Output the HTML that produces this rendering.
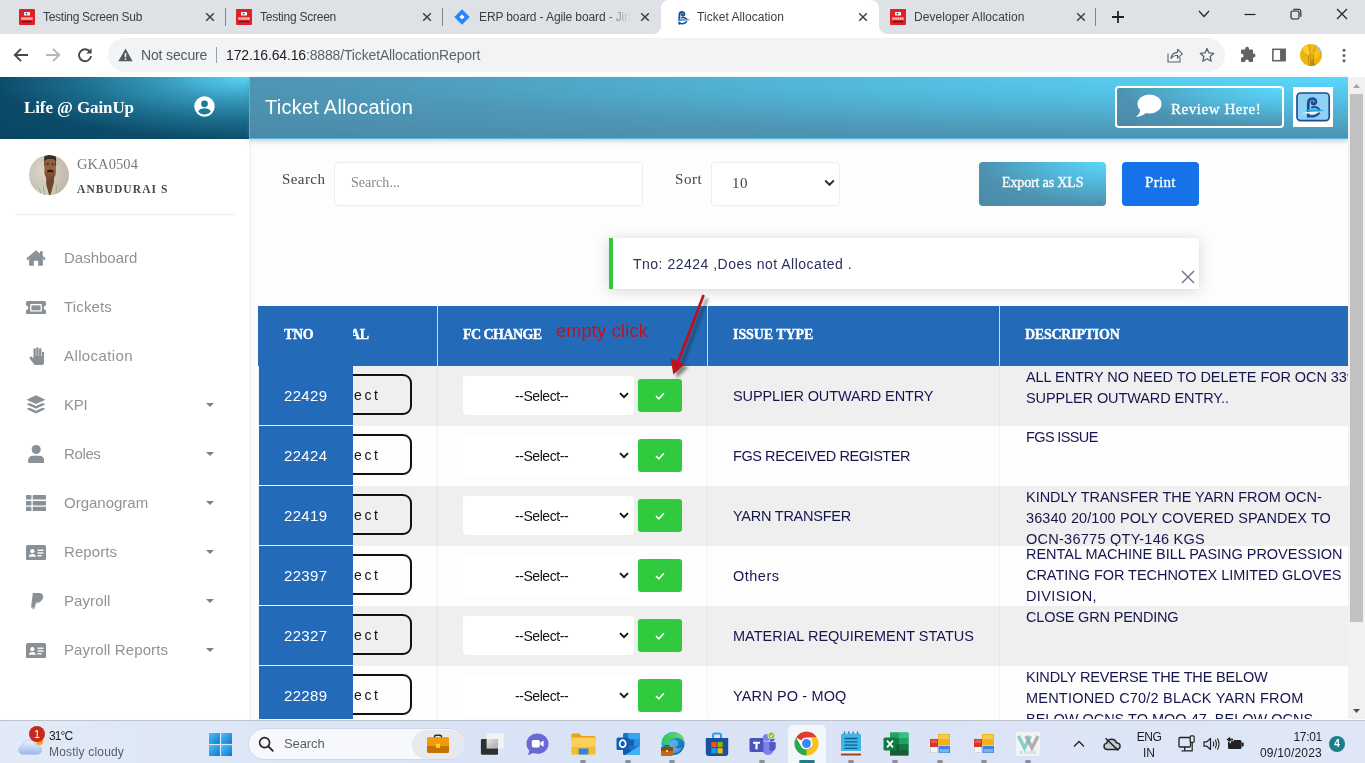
<!DOCTYPE html>
<html lang="en">
<head>
<meta charset="utf-8">
<title>Ticket Allocation</title>
<style>
*{box-sizing:border-box;margin:0;padding:0}
html,body{width:1365px;height:763px;overflow:hidden;background:#fdfdfd;font-family:"Liberation Sans",sans-serif;}
.abs{position:absolute}
#root{position:relative;width:1365px;height:763px;overflow:hidden;background:transparent;will-change:transform}

/* ---------- browser chrome ---------- */
#tabbar{left:0;top:0;width:1365px;height:34px;background:#dee1e6}
.tab{position:absolute;top:0;height:34px;font-size:12px;color:#3c4043;line-height:35px;white-space:nowrap}
.tab .ttl{position:absolute;left:43px;top:0}
.tab .cls{position:absolute;top:0;font-size:0}
.tabsep{position:absolute;top:8px;width:1px;height:18px;background:#80868b}
#tab-active{left:661px;top:0;width:218px;height:34px;background:#fff;border-radius:8px 8px 0 0}
#toolbar{left:0;top:34px;width:1365px;height:43px;background:#fff}
#omni{left:108px;top:38px;width:1117px;height:34px;border-radius:17px;background:#f1f3f4}
.urltxt{font-size:14px;letter-spacing:-.15px;line-height:34px;top:38px;white-space:nowrap}

/* ---------- sidebar ---------- */
#side{left:0;top:77px;width:249px;height:642px;background:#fff}
#sidehead{left:0;top:77px;width:249px;height:62px;background:radial-gradient(ellipse farthest-corner at 100% 0%,#5ad6fb 0%,#3596b8 27%,#1b6c8b 50%,#0b4a68 73%,#0a4664 100%)}
#brand{left:24px;top:77px;height:62px;line-height:61px;color:#fff;font-family:"Liberation Serif",serif;font-weight:bold;font-size:17px;letter-spacing:-.1px;white-space:nowrap}
.nav{position:absolute;left:64px;font-size:15px;color:#8d9498;letter-spacing:.55px;white-space:nowrap;line-height:20px}
.caret{position:absolute;left:206px;width:0;height:0;border-left:4.5px solid transparent;border-right:4.5px solid transparent;border-top:4.5px solid #7b8287}
.nico{position:absolute;left:25px}

/* ---------- main ---------- */
#mainhead{left:249px;top:77px;width:1099px;height:62px;border-left:1px solid #5ab2d6;border-bottom:1px solid #58b6da;background:radial-gradient(ellipse farthest-corner at 100% 0%,#5ad8fd 0%,#52bbdd 32%,#4e97b6 66%,#4b89a6 100%);box-shadow:0 2px 5px rgba(60,120,150,.35)}
#title{left:265px;top:77px;height:62px;line-height:60px;color:#fff;font-size:20px;letter-spacing:.25px;white-space:nowrap}
.lbl{font-family:"Liberation Serif",serif;font-size:15px;color:#444;letter-spacing:.5px}
.inp{background:#fff;border:1px solid #ededed;border-radius:4px}

/* ---------- table ---------- */
#thead{left:258px;top:306px;width:1090px;height:60px;background:#236bb8}
.th{position:absolute;top:306px;height:60px;line-height:58px;-webkit-text-stroke:.35px #fff;color:#fff;font-family:"Liberation Serif",serif;font-weight:bold;font-size:14px;letter-spacing:.3px;white-space:nowrap}
.row{position:absolute;left:258px;width:1090px;height:60px;overflow:hidden}
.row.odd{background:#efefef}
.row.even{background:#fdfdfd}
.tno{position:absolute;left:1px;top:0;width:94px;height:59px;background:#236bb8;color:#fff;font-size:15px;line-height:60px;padding-left:25px;letter-spacing:.32px}
.selbtn{position:absolute;left:40px;top:8px;width:114px;height:41px;border:2px solid #111;border-radius:9px}
.ect{position:absolute;left:96px;top:9px;line-height:41px;font-size:14px;letter-spacing:2.6px;color:#111}
.dd{position:absolute;left:205px;top:10px;width:171px;height:39px;background:#fff;border-radius:3px}
.ddt{position:absolute;left:52px;top:.6px;line-height:39px;font-size:14px;letter-spacing:-.44px;color:#111;white-space:nowrap}
.ok{position:absolute;left:380px;top:13px;width:44px;height:33px;background:#31c93d;border-radius:3px}
.itype{position:absolute;left:475px;top:0;line-height:60px;font-size:14.5px;color:#16164f;white-space:nowrap}
.desc{position:absolute;left:768px;top:0;width:340px;font-size:14.5px;line-height:21px;color:#16164f;white-space:nowrap}
.vline{position:absolute;top:0;width:1px;height:60px;background:rgba(0,0,0,.045)}

/* ---------- taskbar ---------- */
#taskbar{left:0;top:720px;width:1365px;height:43px;background:linear-gradient(90deg,#e2eaf7 0%,#d9e3f6 35%,#dbe4f6 70%,#dfe7f7 100%);border-top:1px solid #bcc3cd}
.tbt{font-size:12px;line-height:16px;color:#1b1b1b;white-space:nowrap}
</style>
</head>
<body>
<div id="root">

<!-- BROWSER CHROME -->
<div id="tabbar" class="abs"></div>
<div id="tab-active" class="abs"></div>
<svg class="abs" style="left:653px;top:26px" width="8" height="8"><path d="M8 0V8H0A8 8 0 0 0 8 0Z" fill="#fff"/></svg>
<svg class="abs" style="left:879px;top:26px" width="8" height="8"><path d="M0 0V8H8A8 8 0 0 1 0 0Z" fill="#fff"/></svg>

<!-- tab 1 -->
<div class="tab" style="left:0;width:225px">
  <svg class="abs" style="left:19px;top:9px" width="16" height="16" viewBox="0 0 16 16"><rect width="16" height="16" rx="1" fill="#dc2228"/><rect x="5" y="3.100" width="6" height="3.400" rx=".5" fill="#f4f4f6"/><circle cx="7.500" cy="4.600" r=".9" fill="#3a4a6a"/><rect x="2.30" y="8.300" width="1.500" height="2.500" fill="#fde4e4" opacity=".9"/><rect x="4.25" y="8.300" width="1.500" height="2.500" fill="#fde4e4" opacity=".9"/><rect x="6.20" y="8.300" width="1.500" height="2.500" fill="#fde4e4" opacity=".9"/><rect x="8.15" y="8.300" width="1.500" height="2.500" fill="#fde4e4" opacity=".9"/><rect x="10.10" y="8.300" width="1.500" height="2.500" fill="#fde4e4" opacity=".9"/><rect x="12.05" y="8.300" width="1.500" height="2.500" fill="#fde4e4" opacity=".9"/><rect x="3" y="12.200" width="10" height="1.100" fill="#1d2a2a"/></svg>
  <span class="ttl" style="letter-spacing:-.28px">Testing Screen Sub</span>
  <svg class="abs" style="left:205px;top:12px" width="10" height="10" viewBox="0 0 10 10"><path d="M1.2 1.2L8.8 8.8M8.8 1.2L1.2 8.8" stroke="#3c4043" stroke-width="1.5" fill="none"/></svg>
</div>
<div class="tabsep" style="left:225px"></div>
<!-- tab 2 -->
<div class="tab" style="left:217px;width:225px">
  <svg class="abs" style="left:19px;top:9px" width="16" height="16" viewBox="0 0 16 16"><rect width="16" height="16" rx="1" fill="#dc2228"/><rect x="5" y="3.100" width="6" height="3.400" rx=".5" fill="#f4f4f6"/><circle cx="7.500" cy="4.600" r=".9" fill="#3a4a6a"/><rect x="2.30" y="8.300" width="1.500" height="2.500" fill="#fde4e4" opacity=".9"/><rect x="4.25" y="8.300" width="1.500" height="2.500" fill="#fde4e4" opacity=".9"/><rect x="6.20" y="8.300" width="1.500" height="2.500" fill="#fde4e4" opacity=".9"/><rect x="8.15" y="8.300" width="1.500" height="2.500" fill="#fde4e4" opacity=".9"/><rect x="10.10" y="8.300" width="1.500" height="2.500" fill="#fde4e4" opacity=".9"/><rect x="12.05" y="8.300" width="1.500" height="2.500" fill="#fde4e4" opacity=".9"/><rect x="3" y="12.200" width="10" height="1.100" fill="#1d2a2a"/></svg>
  <span class="ttl" style="letter-spacing:-.24px">Testing Screen</span>
  <svg class="abs" style="left:205px;top:12px" width="10" height="10" viewBox="0 0 10 10"><path d="M1.2 1.2L8.8 8.8M8.8 1.2L1.2 8.8" stroke="#3c4043" stroke-width="1.5" fill="none"/></svg>
</div>
<div class="tabsep" style="left:442px"></div>
<!-- tab 3 -->
<div class="tab" style="left:435px;width:225px">
  <svg class="abs" style="left:19px;top:9px" width="16" height="16" viewBox="0 0 16 16"><path d="M8 0.3L15.7 8L8 15.7L0.3 8Z" fill="#2684ff"/><path d="M8 5.4L10.6 8L8 10.6L5.4 8Z" fill="#fff"/></svg>
  <span class="ttl" style="left:44px;width:155px;overflow:hidden;letter-spacing:-.12px;-webkit-mask-image:linear-gradient(90deg,#000 125px,transparent 152px)">ERP board - Agile board - Jira</span>
  <svg class="abs" style="left:205px;top:12px" width="10" height="10" viewBox="0 0 10 10"><path d="M1.2 1.2L8.8 8.8M8.8 1.2L1.2 8.8" stroke="#3c4043" stroke-width="1.5" fill="none"/></svg>
</div>
<!-- tab 4 active -->
<div class="tab" style="left:653px;width:225px">
  <svg class="abs" style="left:12.500px;top:.7px" width="33" height="33" viewBox="0 0 50 50"><path d="M20.300 34.600V21.500C20.300 18.300 22 16.600 24.300 16.600C26.600 16.600 28 18 27.900 19.900C27.800 21.500 26.600 22.300 25.300 22.100C24.200 21.900 23.800 20.900 24.200 20" stroke="#1f4e90" stroke-width="2.900" fill="none" stroke-linecap="round"/><path d="M24 25.400C27 24.600 30 25.600 31.300 27.600" stroke="#1f4e90" stroke-width="2.300" fill="none" stroke-linecap="round"/><path d="M20.300 33.800C24 35.200 29 34.200 31 31.200" stroke="#1f4e90" stroke-width="2.400" fill="none" stroke-linecap="round"/><path d="M16.500 28.800Q24 26.200 37.500 28.300Q30 30.400 22 30.200Z" fill="#29a7e6"/><path d="M14.800 31.300Q21 29.500 31.800 30Q27 32.400 20 31.600Z" fill="#fff"/></svg>
  <span class="ttl" style="left:44px;letter-spacing:.04px">Ticket Allocation</span>
  <svg class="abs" style="left:205px;top:12px" width="10" height="10" viewBox="0 0 10 10"><path d="M1.2 1.2L8.8 8.8M8.8 1.2L1.2 8.8" stroke="#3c4043" stroke-width="1.5" fill="none"/></svg>
</div>
<!-- tab 5 -->
<div class="tab" style="left:871px;width:225px">
  <svg class="abs" style="left:19px;top:9px" width="16" height="16" viewBox="0 0 16 16"><rect width="16" height="16" rx="1" fill="#dc2228"/><rect x="5" y="3.100" width="6" height="3.400" rx=".5" fill="#f4f4f6"/><circle cx="7.500" cy="4.600" r=".9" fill="#3a4a6a"/><rect x="2.30" y="8.300" width="1.500" height="2.500" fill="#fde4e4" opacity=".9"/><rect x="4.25" y="8.300" width="1.500" height="2.500" fill="#fde4e4" opacity=".9"/><rect x="6.20" y="8.300" width="1.500" height="2.500" fill="#fde4e4" opacity=".9"/><rect x="8.15" y="8.300" width="1.500" height="2.500" fill="#fde4e4" opacity=".9"/><rect x="10.10" y="8.300" width="1.500" height="2.500" fill="#fde4e4" opacity=".9"/><rect x="12.05" y="8.300" width="1.500" height="2.500" fill="#fde4e4" opacity=".9"/><rect x="3" y="12.200" width="10" height="1.100" fill="#1d2a2a"/></svg>
  <span class="ttl" style="letter-spacing:.05px">Developer Allocation</span>
  <svg class="abs" style="left:205px;top:12px" width="10" height="10" viewBox="0 0 10 10"><path d="M1.2 1.2L8.8 8.8M8.8 1.2L1.2 8.8" stroke="#3c4043" stroke-width="1.5" fill="none"/></svg>
</div>
<div class="tabsep" style="left:1095px"></div>
<!-- new tab + window controls -->
<svg class="abs" style="left:1111px;top:10px" width="14" height="14" viewBox="0 0 14 14"><path d="M7 1V13M1 7H13" stroke="#202124" stroke-width="1.8"/></svg>
<svg class="abs" style="left:1198px;top:9px" width="12" height="10" viewBox="0 0 12 10"><path d="M1 2L6 7.5L11 2" stroke="#202124" stroke-width="1.2" fill="none"/></svg>
<svg class="abs" style="left:1244px;top:13px" width="12" height="3"><path d="M0.5 1.5H11.5" stroke="#202124" stroke-width="1.2"/></svg>
<svg class="abs" style="left:1290px;top:8px" width="12" height="12" viewBox="0 0 12 12"><rect x="1" y="3" width="8" height="8" rx="1.6" stroke="#202124" stroke-width="1.1" fill="none"/><path d="M3.2 1.2H8.6A2.2 2.2 0 0 1 10.8 3.4V8.8" stroke="#202124" stroke-width="1.1" fill="none"/></svg>
<svg class="abs" style="left:1336px;top:8px" width="12" height="12" viewBox="0 0 12 12"><path d="M1 1L11 11M11 1L1 11" stroke="#202124" stroke-width="1.2"/></svg>

<div id="toolbar" class="abs"></div>
<div id="omni" class="abs"></div>
<!-- nav arrows -->
<svg class="abs" style="left:13px;top:47px" width="16" height="16" viewBox="0 0 16 16"><path d="M15 8H2.2M8 1.8L1.8 8L8 14.2" stroke="#45494d" stroke-width="1.9" fill="none"/></svg>
<svg class="abs" style="left:45px;top:47px" width="16" height="16" viewBox="0 0 16 16"><path d="M1 8H13.8M8 1.8L14.2 8L8 14.2" stroke="#b4b7ba" stroke-width="1.9" fill="none"/></svg>
<svg class="abs" style="left:77px;top:47px" width="16" height="16" viewBox="0 0 16 16"><path d="M13.2 5.2A6 6 0 1 0 14 9" stroke="#45494d" stroke-width="1.9" fill="none"/><path d="M14.6 1.2V6.6H9.2Z" fill="#45494d"/></svg>
<!-- warning triangle -->
<svg class="abs" style="left:118px;top:48px" width="15" height="14" viewBox="0 0 15 14"><path d="M7.5 0.6L14.6 13.2H0.4Z" fill="#55595e"/><rect x="6.7" y="5" width="1.6" height="4.2" fill="#f1f3f4"/><rect x="6.7" y="10.2" width="1.6" height="1.6" fill="#f1f3f4"/></svg>
<div class="abs urltxt" style="left:141px;color:#55595e">Not secure</div>
<div class="abs" style="left:216px;top:47px;width:1px;height:16px;background:#9aa0a6"></div>
<div class="abs urltxt" style="left:226px;color:#202124">172.16.64.16<span style="color:#5f6368">:8888/TicketAllocationReport</span></div>
<!-- share -->
<svg class="abs" style="left:1166px;top:46px" width="18" height="18" viewBox="0 0 18 18"><path d="M2 7.5V16H14V11.5" stroke="#5f6368" stroke-width="1.100" fill="none"/><path d="M5 12.5C5.5 8.5 8 6.6 11.5 6.4V3.2L16.4 7.8L11.5 12.2V9.2C9 9.2 6.8 10 5 12.5Z" stroke="#5f6368" stroke-width="1.100" fill="none" stroke-linejoin="round"/></svg>
<!-- star -->
<svg class="abs" style="left:1199px;top:47px" width="16" height="16" viewBox="0 0 18 18"><path d="M9 1.8L11.2 6.7L16.5 7.2L12.5 10.8L13.7 16L9 13.2L4.3 16L5.5 10.8L1.5 7.2L6.8 6.7Z" stroke="#5f6368" stroke-width="1.5" fill="none" stroke-linejoin="round"/></svg>
<!-- puzzle -->
<svg class="abs" style="left:1238px;top:46px" width="18" height="18" viewBox="0 0 18 18"><path d="M7.2 2.6a1.9 1.9 0 0 1 3.8 0V3.6H14a1 1 0 0 1 1 1V7.6h.6a1.9 1.9 0 0 1 0 3.8H15V15a1 1 0 0 1-1 1H10.8v-.8a1.8 1.8 0 0 0-3.6 0V16H4a1 1 0 0 1-1-1V11.6h.7a1.9 1.9 0 0 0 0-3.8H3V4.6a1 1 0 0 1 1-1H7.2Z" fill="#5f6368"/></svg>
<!-- side panel -->
<svg class="abs" style="left:1272px;top:48px" width="14" height="14" viewBox="0 0 16 16"><rect x="1" y="1.5" width="14" height="13" fill="none" stroke="#5f6368" stroke-width="1.8"/><rect x="9.2" y="1.5" width="5.8" height="13" fill="#5f6368"/></svg>
<!-- avatar -->
<svg class="abs" style="left:1300px;top:44px" width="22" height="22" viewBox="0 0 22 22"><defs><clipPath id="cav"><circle cx="11" cy="11" r="11"/></clipPath></defs><g clip-path="url(#cav)"><rect width="22" height="22" fill="#eeb313"/><path d="M15 0H22V9L18 6Z" fill="#9cc9ea"/><ellipse cx="7" cy="6.500" rx="3.400" ry="4.600" fill="#f9cf2c" transform="rotate(-18 7 6.500)"/><ellipse cx="12.500" cy="5.500" rx="3" ry="4.600" fill="#f4b916" transform="rotate(12 12.500 5.500)"/><ellipse cx="16.500" cy="10" rx="2.800" ry="4.200" fill="#f7c520" transform="rotate(20 16.500 10)"/><ellipse cx="5" cy="14" rx="3.200" ry="4" fill="#f2b412" transform="rotate(-10 5 14)"/><path d="M10 9L11.500 22M13.500 11L13 22M8 12L9.500 22" stroke="#b8860b" stroke-width="1.200" opacity=".75"/><path d="M9 2L10 8M14.500 3L13.800 9M5 9L6.500 12" stroke="#d98a08" stroke-width=".9" opacity=".8"/><path d="M12 15L16 22H10Z" fill="#8f8a1c" opacity=".7"/></g></svg>
<!-- menu -->
<svg class="abs" style="left:1341.500px;top:47px" width="4" height="16" viewBox="0 0 4 16"><circle cx="2" cy="3.300" r="1.500" fill="#5f6368"/><circle cx="2" cy="8.500" r="1.500" fill="#5f6368"/><circle cx="2" cy="13.700" r="1.500" fill="#5f6368"/></svg>

<!-- SIDEBAR -->
<div id="side" class="abs"></div>
<div id="sidehead" class="abs"></div>
<div id="brand" class="abs">Life @ GainUp</div>
<svg class="abs" style="left:194px;top:96px" width="21" height="21" viewBox="0 0 21 21"><circle cx="10.5" cy="10.5" r="10.2" fill="#fff"/><circle cx="10.5" cy="7.8" r="3.4" fill="#1c7a9b"/><path d="M4.2 15.6C5.2 12.8 7.6 12.2 10.5 12.2S15.8 12.8 16.8 15.6C15.2 17.6 13 18.6 10.5 18.6S5.8 17.6 4.2 15.6Z" fill="#1c7a9b"/></svg>
<!-- user -->
<svg class="abs" style="left:29px;top:155px" width="40" height="40" viewBox="0 0 40 40"><defs><clipPath id="avc"><circle cx="20" cy="20" r="20"/></clipPath><radialGradient id="avb" cx=".35" cy=".4" r=".75"><stop offset="0" stop-color="#dcd7cb"/><stop offset="1" stop-color="#bdb5a6"/></radialGradient><linearGradient id="avf" x1="0" y1="0" x2="0" y2="1"><stop offset="0" stop-color="#8f5f40"/><stop offset=".5" stop-color="#96623f"/><stop offset="1" stop-color="#6f452c"/></linearGradient></defs><g clip-path="url(#avc)"><rect width="40" height="40" fill="url(#avb)"/><path d="M6 40L8 34L15.500 27L20.500 40Z" fill="#cfd3be"/><path d="M20.500 40L24.500 27.500L31.500 34L33 40Z" fill="#c5c9b2"/><path d="M10.500 33L12 40M14 30L15.500 40M27.500 31L27 40M30.500 33.500L30 40" stroke="#9aa088" stroke-width=".9"/><path d="M17.200 20H25V27L21.500 40H20L17.200 29Z" fill="#6e452d"/><path d="M15.400 3.500H26.900V17C26.900 21 24.500 24.500 21.200 24.500C17.800 24.500 15.400 21 15.400 17Z" fill="url(#avf)"/><path d="M15.200 6V2.800C15.200 1 17 0 21.200 0C25.300 0 27.100 1 27.100 2.800V6C26 4.600 24 4 21.200 4C18.300 4 16.300 4.600 15.200 6Z" fill="#3b2b20"/><rect x="15.200" y="4" width="1.100" height="7" fill="#3b2b20" opacity=".7"/><rect x="26" y="4" width="1.100" height="7" fill="#3b2b20" opacity=".7"/><ellipse cx="18.800" cy="9" rx="1.200" ry=".7" fill="#2a1c14"/><ellipse cx="23.600" cy="9" rx="1.200" ry=".7" fill="#2a1c14"/><path d="M18.300 15.400Q21.200 13.800 24.200 15.400L24.400 17.800Q21.200 16.200 18.100 17.800Z" fill="#2a1c14"/></g></svg>
<div class="abs" style="left:77px;top:154px;font-family:'Liberation Serif',serif;font-size:14.500px;line-height:20px;color:#7a7a7a;letter-spacing:.08px;white-space:nowrap">GKA0504</div>
<div class="abs" style="left:77px;top:179px;font-family:'Liberation Serif',serif;font-weight:bold;font-size:11.500px;line-height:20px;color:#484848;letter-spacing:1.090px;white-space:nowrap">ANBUDURAI S</div>
<div class="abs" style="left:15px;top:214px;width:220px;height:1px;background:#eee"></div>

<!-- nav -->
<svg class="nico" style="left:26.3px;top:249.8px" width="20.0" height="16.4" viewBox="0 0 22 18"><path d="M11 3.4L3.4 9.8V16.6a.6.6 0 0 0 .6.6H8.6V12.4a.5.5 0 0 1 .5-.5h3.8a.5.5 0 0 1 .5.5v4.8H18a.6.6 0 0 0 .6-.6V9.8Z" fill="#8a9196"/><path d="M.3 9.300L11 .3L15.400 4V1.400h3V6.500L21.700 9.300L20.100 11.200L11 3.600L1.900 11.200Z" fill="#8a9196"/></svg>
<div class="nav" style="top:248px;letter-spacing:0px">Dashboard</div>

<svg class="nico" style="left:26.3px;top:300.6px" width="20.0" height="13.7" viewBox="0 0 22 15"><path d="M2 0H20a2 2 0 0 1 2 2V5a2.5 2.5 0 0 0 0 5v3a2 2 0 0 1-2 2H2a2 2 0 0 1-2-2V10a2.500 2.500 0 0 0 0-5V2A2 2 0 0 1 2 0Z" fill="#8a9196"/><rect x="4.6" y="3.4" width="12.800" height="8.200" rx=".8" fill="#fff"/><rect x="6" y="4.800" width="10" height="5.400" fill="#8a9196"/></svg>
<div class="nav" style="top:297px;letter-spacing:0.15px">Tickets</div>

<svg class="nico" style="left:28.1px;top:346.9px" width="16.4" height="18.2" viewBox="0 0 18 20"><path d="M16.600 5.200a1.300 1.300 0 0 0-1.300 1.300V10h-.5V2.800a1.300 1.300 0 0 0-2.600 0V10h-.5V1.500a1.300 1.300 0 0 0-2.600 0V10h-.5V2.800a1.300 1.300 0 0 0-2.600 0V12.600L4.400 11a1.500 1.500 0 0 0-2.400 1.800L6.400 18.800A2.800 2.800 0 0 0 8.700 20h6.200a2.800 2.800 0 0 0 2.700-2.200l.3-1.400V6.500a1.300 1.300 0 0 0-1.300-1.300Z" fill="#8a9196"/></svg>
<div class="nav" style="top:346px;letter-spacing:0.4px">Allocation</div>

<svg class="nico" style="left:26.3px;top:394.9px" width="20.0" height="19.1" viewBox="0 0 22 21"><path d="M11 .4L21.400 5.200L11 10L.6 5.200Z" fill="#8a9196"/><path d="M.6 10.300L3.800 8.800L11 12.200L18.200 8.800L21.400 10.300L11 15.200Z" fill="#8a9196"/><path d="M.6 15.400L3.800 13.900L11 17.300L18.200 13.900L21.400 15.400L11 20.300Z" fill="#8a9196"/></svg>
<div class="nav" style="top:395px;letter-spacing:-0.23px">KPI</div>
<div class="caret" style="top:403px"></div>

<svg class="nico" style="left:28.1px;top:444.9px" width="16.4" height="18.2" viewBox="0 0 18 20"><circle cx="9" cy="5" r="5" fill="#8a9196"/><path d="M0 18.200C0 14 2.600 11.800 5.200 11.800H12.800C15.400 11.800 18 14 18 18.200A1.800 1.800 0 0 1 16.200 20H1.800A1.800 1.800 0 0 1 0 18.200Z" fill="#8a9196"/></svg>
<div class="nav" style="top:444px;letter-spacing:-0.37px">Roles</div>
<div class="caret" style="top:452px"></div>

<svg class="nico" style="left:26.3px;top:494.8px" width="20.0" height="16.4" viewBox="0 0 22 18"><g fill="#8a9196"><rect x="0" y="0" width="6" height="5" rx=".8"/><rect x="7.400" y="0" width="14.600" height="5" rx=".8"/><rect x="0" y="6.500" width="6" height="5" rx=".8"/><rect x="7.400" y="6.500" width="14.600" height="5" rx=".8"/><rect x="0" y="13" width="6" height="5" rx=".8"/><rect x="7.400" y="13" width="14.600" height="5" rx=".8"/></g></svg>
<div class="nav" style="top:493px;letter-spacing:0px">Organogram</div>
<div class="caret" style="top:501px"></div>

<svg class="nico" style="left:26.3px;top:544.8px" width="20.0" height="15.5" viewBox="0 0 22 17"><rect width="22" height="17" rx="2" fill="#8a9196"/><circle cx="7" cy="6.800" r="2.300" fill="#fff"/><path d="M3.200 12.800C3.200 10.600 4.800 9.800 7 9.800S10.800 10.600 10.800 12.800Z" fill="#fff"/><rect x="12.600" y="5" width="6.600" height="1.500" fill="#fff"/><rect x="12.600" y="8" width="6.600" height="1.500" fill="#fff"/><rect x="12.600" y="11" width="4.600" height="1.500" fill="#fff"/></svg>
<div class="nav" style="top:542px;letter-spacing:0.07px">Reports</div>
<div class="caret" style="top:550px"></div>

<svg class="nico" style="left:29.1px;top:591.9px" width="15.5" height="18.2" viewBox="0 0 17 20"><path d="M4.200 1H10.800C14 1 16 2.800 15.600 5.800C15.200 9.200 12.800 11 9.600 11H7.400L6.400 17H2.200Z" fill="#8a9196"/><path d="M7.600 6.200C8 9 11.500 8.200 13.900 7.400C13.200 11.400 10.800 12.800 8 12.800H7.200L6.200 19H3.400L5.200 8Z" fill="#8a9196" opacity=".6"/></svg>
<div class="nav" style="top:591px;letter-spacing:0.09px">Payroll</div>
<div class="caret" style="top:599px"></div>

<svg class="nico" style="left:26.3px;top:642.8px" width="20.0" height="15.5" viewBox="0 0 22 17"><rect width="22" height="17" rx="2" fill="#8a9196"/><circle cx="7" cy="6.800" r="2.300" fill="#fff"/><path d="M3.200 12.800C3.200 10.600 4.800 9.800 7 9.800S10.800 10.600 10.800 12.800Z" fill="#fff"/><rect x="12.600" y="5" width="6.600" height="1.500" fill="#fff"/><rect x="12.600" y="8" width="6.600" height="1.500" fill="#fff"/><rect x="12.600" y="11" width="4.600" height="1.500" fill="#fff"/></svg>
<div class="nav" style="top:640px;letter-spacing:0.1px">Payroll Reports</div>
<div class="caret" style="top:648px"></div>

<!-- MAIN -->
<div id="mainhead" class="abs"></div>
<div id="title" class="abs">Ticket Allocation</div>
<!-- review button -->
<div class="abs" style="left:1115px;top:86px;width:169px;height:42px;border:2px solid #fff;border-radius:4px;background:radial-gradient(ellipse farthest-corner at 100% 0%,#5ad8fd 0%,#52bbdd 35%,#4d93b1 70%,#4b89a6 100%)"></div>
<svg class="abs" style="left:1135px;top:93.500px" width="27" height="24" viewBox="0 0 27 24"><ellipse cx="14.500" cy="10" rx="12" ry="9.600" fill="#fff"/><path d="M5.500 15.500C5 19 3 21.500 .8 22.800C5.500 22.800 9 21 11.500 18.500Z" fill="#fff"/></svg>
<div class="abs" style="left:1171px;top:98px;font-family:'Liberation Serif',serif;-webkit-text-stroke:.3px #fff;font-size:15px;line-height:22px;color:#fff;letter-spacing:.55px;white-space:nowrap">Review Here!</div>
<!-- logo -->
<div class="abs" style="left:1293px;top:87px;width:40px;height:40px;background:#fff"></div>
<svg class="abs" style="left:1288px;top:82px" width="50" height="50" viewBox="0 0 50 50"><rect x="9" y="11" width="32.200" height="27.600" rx="3.600" fill="#8ed1f6" stroke="#1f4e90" stroke-width="1.700"/><path d="M20.300 34.600V21.500C20.300 18.300 22 16.600 24.300 16.600C26.600 16.600 28 18 27.900 19.900C27.800 21.500 26.600 22.300 25.300 22.100C24.200 21.900 23.800 20.900 24.200 20" stroke="#1f4e90" stroke-width="2.800" fill="none" stroke-linecap="round"/><path d="M24 25.400C27 24.600 30 25.600 31.300 27.600" stroke="#1f4e90" stroke-width="2.100" fill="none" stroke-linecap="round"/><path d="M20.300 33.800C24 35.200 29 34.200 31 31.200" stroke="#1f4e90" stroke-width="2.200" fill="none" stroke-linecap="round"/><path d="M17.500 28.700Q24 26.200 36.800 28.300Q30 30.200 22 30Z" fill="#29a7e6"/><path d="M13.800 31.300Q21 29.300 31.800 30Q27 32.600 20 31.600Z" fill="#fff"/></svg>

<div class="abs" style="left:249px;top:139px;width:5px;height:581px;background:linear-gradient(90deg,rgba(0,0,0,.045),rgba(0,0,0,0))"></div>
<!-- search row -->
<div class="abs lbl" style="left:282px;top:168px;line-height:22px;letter-spacing:.43px">Search</div>
<div class="abs inp" style="left:334px;top:162px;width:309px;height:44px"></div>
<div class="abs" style="left:351px;top:172px;font-family:'Liberation Serif',serif;font-size:14px;line-height:22px;color:#8a8a8a;letter-spacing:.05px">Search...</div>
<div class="abs lbl" style="left:675px;top:168px;line-height:22px;letter-spacing:.57px">Sort</div>
<div class="abs inp" style="left:711px;top:162px;width:129px;height:44px"></div>
<div class="abs" style="left:732px;top:172px;font-family:'Liberation Serif',serif;font-size:15px;line-height:22px;color:#444;letter-spacing:.5px">10</div>
<svg class="abs" style="left:824px;top:179px" width="11" height="8" viewBox="0 0 11 8"><path d="M1.200 1.500L5.500 5.800L9.800 1.500" stroke="#333" stroke-width="2" fill="none"/></svg>
<div class="abs" style="left:979px;top:162px;width:127px;height:44px;border-radius:4px;background:radial-gradient(ellipse farthest-corner at 100% 0%,#5ad8fd 0%,#52bbdd 30%,#4d93b1 68%,#4b89a6 100%)"></div>
<div class="abs" style="left:1002px;top:172px;font-family:'Liberation Serif',serif;-webkit-text-stroke:.3px #fff;font-size:14px;line-height:22px;color:#fff;letter-spacing:-.14px;white-space:nowrap">Export as XLS</div>
<div class="abs" style="left:1122px;top:162px;width:77px;height:44px;border-radius:4px;background:#1672e8"></div>
<div class="abs" style="left:1145px;top:171px;font-family:'Liberation Serif',serif;-webkit-text-stroke:.3px #fff;font-size:15px;line-height:22px;color:#fff;letter-spacing:.3px;white-space:nowrap">Print</div>

<!-- toast -->
<div class="abs" style="left:609px;top:238px;width:590px;height:51px;background:#fff;border-left:4px solid #31c93d;box-shadow:0 2px 14px rgba(0,0,0,.15),0 0 3px rgba(0,0,0,.05)"></div>
<div class="abs" style="left:633px;top:254px;font-size:14px;line-height:20px;color:#2b2f5b;letter-spacing:.5px;white-space:nowrap">Tno: 22424 ,Does not Allocated .</div>
<svg class="abs" style="left:1181px;top:270px" width="14" height="14" viewBox="0 0 14 14"><path d="M1 1L13 13M13 1L1 13" stroke="#6b6f8a" stroke-width="1.400"/></svg>

<!-- scrollbar -->
<div class="abs" style="left:1348px;top:77px;width:17px;height:642px;background:#f1f1f1"></div>
<div class="abs" style="left:1350px;top:94px;width:13px;height:528px;background:#c1c1c1"></div>
<svg class="abs" style="left:1353px;top:84px" width="7" height="4"><path d="M0 4L3.500 0L7 4Z" fill="#a3a3a3"/></svg>
<svg class="abs" style="left:1353px;top:709px" width="7" height="4"><path d="M0 0L3.500 4L7 0Z" fill="#505050"/></svg>

<!-- TABLE -->
<div id="thead" class="abs"></div>
<div class="th" style="left:284px;letter-spacing:-.35px">TNO</div>
<div class="th" style="left:353px;width:20px;overflow:hidden"><span style="margin-left:-3px;letter-spacing:-.3px">AL</span></div>
<div class="th" style="left:463px;letter-spacing:-.55px">FC CHANGE</div>
<div class="th" style="left:733px;letter-spacing:-.07px">ISSUE TYPE</div>
<div class="th" style="left:1025px;letter-spacing:-.25px">DESCRIPTION</div>
<div class="abs" style="left:437px;top:306px;width:1px;height:60px;background:rgba(255,255,255,.75)"></div>
<div class="abs" style="left:707px;top:306px;width:1px;height:60px;background:rgba(255,255,255,.75)"></div>
<div class="abs" style="left:999px;top:306px;width:1px;height:60px;background:rgba(255,255,255,.75)"></div>
<div class="row odd" style="top:366px;height:60px">
  <div class="vline" style="left:179px"></div>
  <div class="vline" style="left:449px"></div>
  <div class="vline" style="left:741px"></div>
  <div class="selbtn"></div><span class="ect">ect</span>
  <div class="tno">22429</div>
  <div class="dd"><span class="ddt">--Select--</span><svg class="abs" style="left:156px;top:16px" width="10" height="7" viewBox="0 0 10 7"><path d="M1 1.200L5 5.200L9 1.200" stroke="#111" stroke-width="1.900" fill="none"/></svg></div>
  <div class="ok"><svg class="abs" style="left:17px;top:12.600px" width="10" height="8" viewBox="0 0 10 8"><path d="M1 4L3.800 6.800L9 1.200" stroke="#fff" stroke-width="1.500" fill="none"/></svg></div>
  <div class="itype" style="letter-spacing:-.12px">SUPPLIER OUTWARD ENTRY</div>
  <div class="desc" style="top:1px"><div style="letter-spacing:-0.06px">ALL ENTRY NO NEED TO DELETE FOR OCN 33940 IN</div><div style="letter-spacing:-0.1px">SUPPLER OUTWARD ENTRY..</div></div>
</div>
<div class="row even" style="top:426px;height:60px">
  <div class="vline" style="left:179px"></div>
  <div class="vline" style="left:449px"></div>
  <div class="vline" style="left:741px"></div>
  <div class="selbtn"></div><span class="ect">ect</span>
  <div class="tno">22424</div>
  <div class="dd"><span class="ddt">--Select--</span><svg class="abs" style="left:156px;top:16px" width="10" height="7" viewBox="0 0 10 7"><path d="M1 1.200L5 5.200L9 1.200" stroke="#111" stroke-width="1.900" fill="none"/></svg></div>
  <div class="ok"><svg class="abs" style="left:17px;top:12.600px" width="10" height="8" viewBox="0 0 10 8"><path d="M1 4L3.800 6.800L9 1.200" stroke="#fff" stroke-width="1.500" fill="none"/></svg></div>
  <div class="itype" style="letter-spacing:-0.43px">FGS RECEIVED REGISTER</div>
  <div class="desc" style="top:1px"><div style="letter-spacing:-.62px">FGS ISSUE</div></div>
</div>
<div class="row odd" style="top:486px;height:60px">
  <div class="vline" style="left:179px"></div>
  <div class="vline" style="left:449px"></div>
  <div class="vline" style="left:741px"></div>
  <div class="selbtn"></div><span class="ect">ect</span>
  <div class="tno">22419</div>
  <div class="dd"><span class="ddt">--Select--</span><svg class="abs" style="left:156px;top:16px" width="10" height="7" viewBox="0 0 10 7"><path d="M1 1.200L5 5.200L9 1.200" stroke="#111" stroke-width="1.900" fill="none"/></svg></div>
  <div class="ok"><svg class="abs" style="left:17px;top:12.600px" width="10" height="8" viewBox="0 0 10 8"><path d="M1 4L3.800 6.800L9 1.200" stroke="#fff" stroke-width="1.500" fill="none"/></svg></div>
  <div class="itype" style="letter-spacing:-0.24px">YARN TRANSFER</div>
  <div class="desc" style="top:1px"><div style="letter-spacing:-0.02px">KINDLY TRANSFER THE YARN FROM OCN-</div><div style="letter-spacing:0.09px">36340 20/100 POLY COVERED SPANDEX TO</div><div style="letter-spacing:0.26px">OCN-36775 QTY-146 KGS</div></div>
</div>
<div class="row even" style="top:546px;height:60px">
  <div class="vline" style="left:179px"></div>
  <div class="vline" style="left:449px"></div>
  <div class="vline" style="left:741px"></div>
  <div class="selbtn"></div><span class="ect">ect</span>
  <div class="tno">22397</div>
  <div class="dd"><span class="ddt">--Select--</span><svg class="abs" style="left:156px;top:16px" width="10" height="7" viewBox="0 0 10 7"><path d="M1 1.200L5 5.200L9 1.200" stroke="#111" stroke-width="1.900" fill="none"/></svg></div>
  <div class="ok"><svg class="abs" style="left:17px;top:12.600px" width="10" height="8" viewBox="0 0 10 8"><path d="M1 4L3.800 6.800L9 1.200" stroke="#fff" stroke-width="1.500" fill="none"/></svg></div>
  <div class="itype" style="letter-spacing:0.5px">Others</div>
  <div class="desc" style="top:-2px"><div style="letter-spacing:-0.03px">RENTAL MACHINE BILL PASING PROVESSION</div><div style="letter-spacing:-0.04px">CRATING FOR TECHNOTEX LIMITED GLOVES</div><div style="letter-spacing:.37px">DIVISION,</div></div>
</div>
<div class="row odd" style="top:606px;height:60px">
  <div class="vline" style="left:179px"></div>
  <div class="vline" style="left:449px"></div>
  <div class="vline" style="left:741px"></div>
  <div class="selbtn"></div><span class="ect">ect</span>
  <div class="tno">22327</div>
  <div class="dd"><span class="ddt">--Select--</span><svg class="abs" style="left:156px;top:16px" width="10" height="7" viewBox="0 0 10 7"><path d="M1 1.200L5 5.200L9 1.200" stroke="#111" stroke-width="1.900" fill="none"/></svg></div>
  <div class="ok"><svg class="abs" style="left:17px;top:12.600px" width="10" height="8" viewBox="0 0 10 8"><path d="M1 4L3.800 6.800L9 1.200" stroke="#fff" stroke-width="1.500" fill="none"/></svg></div>
  <div class="itype" style="letter-spacing:0px">MATERIAL REQUIREMENT STATUS</div>
  <div class="desc" style="top:1px"><div style="letter-spacing:-0.18px">CLOSE GRN PENDING</div></div>
</div>
<div class="row even" style="top:666px;height:53px">
  <div class="vline" style="left:179px"></div>
  <div class="vline" style="left:449px"></div>
  <div class="vline" style="left:741px"></div>
  <div class="selbtn"></div><span class="ect">ect</span>
  <div class="tno">22289</div>
  <div class="dd"><span class="ddt">--Select--</span><svg class="abs" style="left:156px;top:16px" width="10" height="7" viewBox="0 0 10 7"><path d="M1 1.200L5 5.200L9 1.200" stroke="#111" stroke-width="1.900" fill="none"/></svg></div>
  <div class="ok"><svg class="abs" style="left:17px;top:12.600px" width="10" height="8" viewBox="0 0 10 8"><path d="M1 4L3.800 6.800L9 1.200" stroke="#fff" stroke-width="1.500" fill="none"/></svg></div>
  <div class="itype" style="letter-spacing:0.14px">YARN PO - MOQ</div>
  <div class="desc" style="top:1px"><div style="letter-spacing:-0.17px">KINDLY REVERSE THE THE BELOW</div><div style="letter-spacing:0.21px">MENTIONED C70/2 BLACK YARN FROM</div><div style="letter-spacing:0px">BELOW OCNS TO MOQ 47. BELOW OCNS</div></div>
</div>

<!-- ANNOTATION -->
<div class="abs" style="left:556px;top:320px;font-size:18px;line-height:22px;color:#c8101a;letter-spacing:.27px;white-space:nowrap">empty click</div>
<svg class="abs" style="left:655px;top:285px;overflow:visible" width="70" height="105" viewBox="655 285 70 105">
  <defs><filter id="ash" x="-50%" y="-20%" width="200%" height="140%"><feGaussianBlur stdDeviation="1.600"/></filter></defs>
  <g transform="translate(3.500,3.500)" opacity=".5" filter="url(#ash)"><path d="M703.600 295.100L678.400 361" stroke="#222" stroke-width="2.800" fill="none"/><path d="M673.300 374.400L670.700 358.300L684.800 363.900Z" fill="#222"/></g>
  <path d="M703.600 295.100L678.400 361" stroke="#c0101c" stroke-width="2.700" fill="none"/>
  <path d="M673.300 374.400L670.700 358.300L684.800 363.900Z" fill="#c0101c"/>
</svg>

<!-- TASKBAR -->
<div id="taskbar" class="abs"></div>
<!-- weather -->
<div class="abs" style="left:36px;top:738px;width:7px;height:7px;border-radius:50%;background:#f59a23"></div>
<svg class="abs" style="left:17.500px;top:737px" width="24.500" height="17.800" viewBox="0 0 27 20"><defs><linearGradient id="cl" x1="0" y1="0" x2="0" y2="1"><stop offset="0" stop-color="#eef3fd"/><stop offset="1" stop-color="#9bb8ec"/></linearGradient></defs><path d="M6.500 19.500C2.800 19.500 .5 17.300 .5 14.500C.5 11.900 2.500 9.900 5 9.700C5.600 5.800 8.800 3.500 12.500 3.500C16.200 3.500 19 5.800 19.800 9C23.600 9 26.500 11.200 26.500 14.300C26.500 17.300 24 19.500 20.500 19.500Z" fill="url(#cl)" stroke="#9db8e6" stroke-width=".6"/></svg>
<div class="abs" style="left:29px;top:726px;width:16px;height:16px;border-radius:50%;background:#c42b1c;color:#fff;font-size:11px;line-height:16px;text-align:center">1</div>
<div class="abs tbt" style="left:49px;top:728px;letter-spacing:-.9px">31°C</div>
<div class="abs tbt" style="left:49px;top:744px;letter-spacing:.18px;color:#595d63">Mostly cloudy</div>
<!-- start -->
<svg class="abs" style="left:209px;top:733px" width="23" height="23" viewBox="0 0 23 23"><defs><linearGradient id="wl" x1="0" y1="0" x2="1" y2="1"><stop offset="0" stop-color="#4cc2f1"/><stop offset="1" stop-color="#0a78d4"/></linearGradient></defs><g fill="url(#wl)"><rect x="0" y="0" width="10.900" height="10.900"/><rect x="12.100" y="0" width="10.900" height="10.900"/><rect x="0" y="12.100" width="10.900" height="10.900"/><rect x="12.100" y="12.100" width="10.900" height="10.900"/></g></svg>
<!-- search pill -->
<div class="abs" style="left:248px;top:728px;width:218px;height:31.500px;border-radius:16px;background:#f6f8fd;border:1px solid #d0d8e6"></div>
<div class="abs" style="left:412px;top:729.500px;width:53px;height:29px;border-radius:14.500px;background:#e6e9ef"></div>
<svg class="abs" style="left:258px;top:736px" width="16" height="16" viewBox="0 0 16 16"><circle cx="6.600" cy="6.600" r="5" stroke="#222" stroke-width="1.600" fill="none"/><path d="M10.300 10.300L14.800 14.800" stroke="#222" stroke-width="1.800" stroke-linecap="round"/></svg>
<div class="abs" style="left:284px;top:735px;font-size:13px;line-height:18px;color:#5c6066;letter-spacing:-.1px">Search</div>
<!-- briefcase -->
<svg class="abs" style="left:426px;top:734px" width="24" height="20" viewBox="0 0 24 20"><path d="M8.600 4V2.600A1.300 1.300 0 0 1 9.900 1.300H14.100A1.300 1.300 0 0 1 15.400 2.600V4" stroke="#2b2b2b" stroke-width="1.500" fill="none"/><rect x="1" y="3.600" width="22" height="15.400" rx="1.300" fill="#c47206"/><path d="M1 4.900A1.300 1.300 0 0 1 2.300 3.600H21.700A1.300 1.300 0 0 1 23 4.900V12H1Z" fill="#f09b0b"/><rect x="10" y="9.800" width="4" height="4" fill="#ffd60a"/></svg>
<!-- task view -->
<svg class="abs" style="left:480px;top:732px" width="25" height="24" viewBox="0 0 25 24"><defs><linearGradient id="tvg" x1="0" y1="0" x2="1" y2="1"><stop offset="0" stop-color="#e3e3e3"/><stop offset="1" stop-color="#a9a9a9"/></linearGradient></defs><rect x="6.600" y="1.200" width="17.200" height="15.400" rx="1.200" fill="#f3f3f1"/><rect x=".9" y="6.900" width="17.100" height="15.800" rx="1.200" fill="#2f2f2f"/><rect x="6.600" y="6.900" width="11.400" height="9.700" fill="url(#tvg)"/></svg>
<!-- teams chat -->
<svg class="abs" style="left:525px;top:732px" width="25" height="25" viewBox="0 0 25 25"><path d="M12.500 1.500C18.800 1.500 23.500 6 23.500 11.700C23.500 17.400 18.800 21.800 12.500 21.800C11 21.800 9.600 21.600 8.300 21.100L3 23.300L4.300 18.500C2.500 16.700 1.500 14.300 1.500 11.700C1.500 6 6.200 1.500 12.500 1.500Z" fill="#6b69d6"/><rect x="6.800" y="8" width="8" height="7.400" rx="1.600" fill="#fff"/><path d="M15.400 10.600L18.600 8.600V14.800L15.400 12.800Z" fill="#fff"/></svg>
<!-- folder -->
<svg class="abs" style="left:571px;top:733px" width="25" height="22" viewBox="0 0 25 22"><path d="M.5 2A1.500 1.500 0 0 1 2 .5H8.500L11 3H23A1.500 1.500 0 0 1 24.500 4.500V8H.5Z" fill="#e8a317"/><rect x=".5" y="4.500" width="24" height="17" rx="1.500" fill="#fcd05a"/><path d="M.5 14H24.500V20A1.500 1.500 0 0 1 23 21.500H2A1.500 1.500 0 0 1 .5 20Z" fill="#f7bb2e"/><rect x="7.500" y="15.500" width="10" height="6" rx="1" fill="#2f86e0"/></svg>
<!-- outlook -->
<svg class="abs" style="left:616px;top:732px" width="25" height="24" viewBox="0 0 25 24"><rect x="7" y="1" width="17" height="20" rx="1.500" fill="#1b74c9"/><rect x="12" y="1" width="12" height="6.500" fill="#35a7ee"/><rect x="12" y="7.500" width="6" height="6.500" fill="#1a5fb0"/><rect x="18" y="7.500" width="6" height="6.500" fill="#2a8fe0"/><path d="M7 14L24 23H8.500A1.500 1.500 0 0 1 7 21.500Z" fill="#1458a6"/><path d="M24 13.500L9 23H22.500A1.500 1.500 0 0 0 24 21.500Z" fill="#41b0f2"/><rect x=".5" y="5.500" width="12.500" height="12.500" rx="1.500" fill="#0f5fb4"/><ellipse cx="6.700" cy="11.700" rx="3" ry="3.500" fill="none" stroke="#fff" stroke-width="1.700"/></svg>
<!-- edge -->
<svg class="abs" style="left:660px;top:731px" width="26" height="26" viewBox="0 0 26 26"><defs><linearGradient id="eg" x1="0" y1="0" x2="1" y2="1"><stop offset="0" stop-color="#35c1f1"/><stop offset=".5" stop-color="#1b8fd8"/><stop offset="1" stop-color="#0c59a4"/></linearGradient><linearGradient id="eg2" x1="0" y1="0" x2="1" y2="0"><stop offset="0" stop-color="#2fc36a"/><stop offset="1" stop-color="#7ddc4a"/></linearGradient></defs><circle cx="13" cy="12.500" r="11.500" fill="url(#eg)"/><path d="M2 9.500C4 3.500 10 .8 15.500 1.500C21 2.300 24.800 7 24.400 12C22.500 7.500 17.500 5.800 13.200 7.500C9.800 8.800 8.600 11.800 9.400 14.500C5.800 14.800 3 13 2 9.500Z" fill="url(#eg2)"/><path d="M9.400 14.500C9 11.800 10.800 9.300 13.500 9C16.600 8.700 18.600 10.800 18.400 13.200C18.200 15 16.800 15.800 15 15.600C16 17.500 19.500 17.800 22.500 16C20.500 20.800 15.500 23 11.500 22C11 19 10 17 9.400 14.500Z" fill="#fff" opacity=".28"/><rect x="1" y="16" width="12" height="9" rx="1.300" fill="#c06b14"/><rect x="1" y="16" width="12" height="4" rx="1.300" fill="#8c4a0d"/><path d="M5 16V14.600H9V16" stroke="#6b3f12" stroke-width="1" fill="none"/><rect x="6" y="19" width="2" height="2" fill="#ffd93b"/></svg>
<!-- store -->
<svg class="abs" style="left:705px;top:731px" width="24" height="26" viewBox="0 0 24 26"><path d="M8 7V4.500A2 2 0 0 1 10 2.500H14A2 2 0 0 1 16 4.500V7" stroke="#2f9be8" stroke-width="2" fill="none"/><path d="M.8 7H23.200V22A3 3 0 0 1 20.200 25H3.800A3 3 0 0 1 .8 22Z" fill="#1c4f9c"/><rect x="6.300" y="11" width="5.200" height="5.200" fill="#f25022"/><rect x="12.500" y="11" width="5.200" height="5.200" fill="#7fba00"/><rect x="6.300" y="17.200" width="5.200" height="5.200" fill="#00a4ef"/><rect x="12.500" y="17.200" width="5.200" height="5.200" fill="#ffb900"/></svg>
<!-- teams -->
<svg class="abs" style="left:749px;top:731px" width="27" height="26" viewBox="0 0 27 26"><circle cx="17.500" cy="6.500" r="3.600" fill="#7b83eb"/><circle cx="23" cy="8" r="2.500" fill="#5059c9"/><path d="M12 10.500H23.500A1.500 1.500 0 0 1 25 12V18A6 6 0 0 1 13 18Z" fill="#7b83eb"/><path d="M20.500 11H25.500A1.200 1.200 0 0 1 26.700 12.200V16.500A4 4 0 0 1 20.500 19.500Z" fill="#5059c9"/><rect x=".5" y="7" width="14" height="14" rx="1.600" fill="#4b53bc"/><path d="M4 10.800H11V12.800H8.600V18.200H6.400V12.800H4Z" fill="#fff"/><circle cx="22.500" cy="4.500" r="3.800" fill="#fff"/><circle cx="22.500" cy="4.500" r="3.200" fill="#8cc63f"/><path d="M20.800 4.600L22 5.800L24.200 3.400" stroke="#fff" stroke-width="1" fill="none"/></svg>
<!-- chrome highlight + icon -->
<div class="abs" style="left:788px;top:725px;width:38px;height:38px;border-radius:5px 5px 0 0;background:#f3f6fb"></div>
<svg class="abs" style="left:794px;top:731px" width="25" height="25" viewBox="0 0 25 25"><circle cx="12.500" cy="12.500" r="12" fill="#fff"/><path d="M12.500 .5A12 12 0 0 1 22.900 6.500H12.500A6 6 0 0 0 7.300 9.500L2.100 6.500A12 12 0 0 1 12.500 .5Z" fill="#e33b2e"/><path d="M22.900 6.500A12 12 0 0 1 12.500 24.500L17.700 15.500A6 6 0 0 0 17.700 9.500L17.500 6.500Z" fill="#fbc116"/><path d="M2.100 6.500L7.300 15.500A6 6 0 0 0 12.500 18.500L17.700 15.500L12.500 24.500A12 12 0 0 1 2.100 6.500Z" fill="#2da94f"/><path d="M12.500 18.500A6 6 0 0 0 17.700 15.500L12.500 24.500Z" fill="#fbc116"/><circle cx="12.500" cy="12.500" r="5.600" fill="#fff"/><circle cx="12.500" cy="12.500" r="4.500" fill="#3f86f4"/></svg>
<!-- notepad -->
<svg class="abs" style="left:840px;top:731px" width="22" height="26" viewBox="0 0 22 26"><g stroke="#3a6d8c" stroke-width="1.300"><path d="M4.500 .5V4M8.800 .5V4M13.200 .5V4M17.500 .5V4"/></g><rect x="1" y="2.500" width="20" height="21" rx="1.800" fill="#3fb5e8"/><rect x="1" y="20" width="20" height="3.500" fill="#e9eef2"/><rect x="1" y="22.500" width="20" height="2" fill="#a3421b"/><g stroke="#135e8a" stroke-width="1.300"><path d="M4.500 7.500H17.500M4.500 10.800H17.500M4.500 14.100H17.500M4.500 17.400H17.500"/></g></svg>
<!-- excel -->
<svg class="abs" style="left:883px;top:732px" width="26" height="24" viewBox="0 0 26 24"><rect x="7" y=".5" width="18.500" height="23" rx="1.500" fill="#21a366"/><rect x="7" y=".5" width="9.200" height="5.800" fill="#21a366"/><rect x="16.200" y=".5" width="9.300" height="5.800" fill="#33c481"/><rect x="7" y="6.300" width="9.200" height="5.800" fill="#107c41"/><rect x="16.200" y="6.300" width="9.300" height="5.800" fill="#21a366"/><rect x="7" y="12.100" width="9.200" height="5.800" fill="#185c37"/><rect x="16.200" y="12.100" width="9.300" height="5.800" fill="#107c41"/><rect x="7" y="17.900" width="18.500" height="5.600" fill="#185c37"/><rect x=".5" y="5.500" width="13" height="13" rx="1.500" fill="#107c41"/><path d="M4 8.600L10 15.400M10 8.600L4 15.400" stroke="#fff" stroke-width="1.800"/></svg>
<!-- app icons -->
<svg class="abs" style="left:929px;top:733px" width="22" height="22" viewBox="0 0 22 22"><rect x="1.500" y="13.500" width="7" height="6" fill="#f4f6fa" stroke="#c9c9c9" stroke-width=".6"/><rect x="1" y="6" width="8" height="8" fill="#d9362b"/><rect x="2" y="7" width="6" height="3" fill="#ef6a5c" opacity=".7"/><rect x="9" y="1" width="12" height="11.500" fill="#f2b11c"/><rect x="10" y="2" width="10" height="4" fill="#fbd257" opacity=".8"/><rect x="9.500" y="13" width="11.500" height="7" fill="#3d84e6"/><rect x="10.500" y="16" width="9.500" height="3.500" fill="#8db9f3" opacity=".8"/></svg>
<svg class="abs" style="left:973px;top:733px" width="22" height="22" viewBox="0 0 22 22"><rect x="1.500" y="13.500" width="7" height="6" fill="#f4f6fa" stroke="#c9c9c9" stroke-width=".6"/><rect x="1" y="6" width="8" height="8" fill="#d9362b"/><rect x="2" y="7" width="6" height="3" fill="#ef6a5c" opacity=".7"/><rect x="9" y="1" width="12" height="11.500" fill="#f2b11c"/><rect x="10" y="2" width="10" height="4" fill="#fbd257" opacity=".8"/><rect x="9.500" y="13" width="11.500" height="7" fill="#3d84e6"/><rect x="10.500" y="16" width="9.500" height="3.500" fill="#8db9f3" opacity=".8"/></svg>
<svg class="abs" style="left:1016px;top:732px" width="24" height="24" viewBox="0 0 24 24"><rect width="24" height="24" fill="#f1f3f5"/><path d="M2.500 4L8.500 16L14.500 4" stroke="#86d0cb" stroke-width="3.400" fill="none"/><path d="M10 4L16 16L22 4" stroke="#a4a9ac" stroke-width="3.400" fill="none" opacity=".9"/><text x="12" y="21.800" text-anchor="middle" font-family="Liberation Sans,sans-serif" font-size="3.800" letter-spacing=".5" fill="#b5babd">WOVEN</text></svg>
<!-- tray -->
<svg class="abs" style="left:1073px;top:740px" width="12" height="8" viewBox="0 0 12 8"><path d="M1 6.500L6 1.500L11 6.500" stroke="#222" stroke-width="1.300" fill="none"/></svg>
<svg class="abs" style="left:1102.500px;top:736.500px" width="18" height="14.600" viewBox="0 0 21 17"><path d="M5.500 14.500C3 14.500 1.200 12.800 1.200 10.700C1.200 8.800 2.600 7.400 4.400 7.100C4.900 4.300 7.300 2.500 10 2.500C12.800 2.500 15 4.200 15.700 6.700C18.300 6.900 19.900 8.500 19.900 10.600C19.900 12.800 18.200 14.500 15.800 14.500Z" stroke="#222" stroke-width="1.700" fill="#c6cbd3"/><path d="M3 1.500L18 15.800" stroke="#222" stroke-width="1.800"/></svg>
<div class="abs tbt" style="left:1130px;top:729px;width:38px;text-align:center;letter-spacing:-.5px">ENG</div>
<div class="abs tbt" style="left:1130px;top:745px;width:38px;text-align:center">IN</div>
<svg class="abs" style="left:1178px;top:735px" width="18" height="18" viewBox="0 0 18 18"><rect x="1" y="2.500" width="11.500" height="9.500" rx="1" stroke="#222" stroke-width="1.300" fill="none"/><path d="M6.700 12V15.500M3.500 15.800H10" stroke="#222" stroke-width="1.300"/><rect x="12.200" y=".8" width="4" height="6.500" rx="1" fill="#dfe8f7" stroke="#222" stroke-width="1.200"/><path d="M14.200 7.300V15.800H10" stroke="#222" stroke-width="1.200" fill="none"/></svg>
<svg class="abs" style="left:1203px;top:736px" width="17" height="16" viewBox="0 0 17 16"><path d="M1 5.800H3.800L7.500 2.500V13.500L3.800 10.200H1Z" stroke="#222" stroke-width="1.200" fill="none" stroke-linejoin="round"/><path d="M10 5.500Q11.500 8 10 10.500M12.200 3.800Q14.600 8 12.200 12.200M14.400 2.200Q17.600 8 14.400 13.800" stroke="#222" stroke-width="1.100" fill="none"/></svg>
<svg class="abs" style="left:1225px;top:735px" width="20" height="17" viewBox="0 0 20 17"><rect x="3" y="5" width="13.500" height="9" rx="1.500" fill="#222"/><rect x="16.500" y="7.500" width="2.200" height="4" rx=".8" fill="#222"/><path d="M1 4.500L5.500 1V3.200H8.500V5.800H5.500V8Z" fill="#222" stroke="#e4ebf6" stroke-width=".8"/></svg>
<div class="abs tbt" style="left:1250px;top:729px;width:72px;text-align:right;letter-spacing:-.3px">17:01</div>
<div class="abs tbt" style="left:1250px;top:745px;width:72px;text-align:right;letter-spacing:.2px">09/10/2023</div>
<div class="abs" style="left:1329px;top:736px;width:16px;height:16px;border-radius:50%;background:#1c7f8e;color:#fff;font-size:10px;font-weight:bold;line-height:16px;text-align:center">4</div>
<div class="abs" style="left:580.0px;top:760px;width:6px;height:3px;border-radius:1.500px;background:#8b8f96"></div>
<div class="abs" style="left:625.0px;top:760px;width:6px;height:3px;border-radius:1.500px;background:#8b8f96"></div>
<div class="abs" style="left:669.0px;top:760px;width:6px;height:3px;border-radius:1.500px;background:#8b8f96"></div>
<div class="abs" style="left:759.0px;top:760px;width:6px;height:3px;border-radius:1.500px;background:#8b8f96"></div>
<div class="abs" style="left:798.5px;top:760px;width:16px;height:3px;border-radius:1.500px;background:#1c7f8e"></div>
<div class="abs" style="left:848.0px;top:760px;width:6px;height:3px;border-radius:1.500px;background:#8b8f96"></div>
<div class="abs" style="left:892.0px;top:760px;width:6px;height:3px;border-radius:1.500px;background:#8b8f96"></div>
<div class="abs" style="left:937.0px;top:760px;width:6px;height:3px;border-radius:1.500px;background:#8b8f96"></div>
<div class="abs" style="left:981.0px;top:760px;width:6px;height:3px;border-radius:1.500px;background:#8b8f96"></div>
<div class="abs" style="left:1025.0px;top:760px;width:6px;height:3px;border-radius:1.500px;background:#8b8f96"></div>

</div>
</body>
</html>
